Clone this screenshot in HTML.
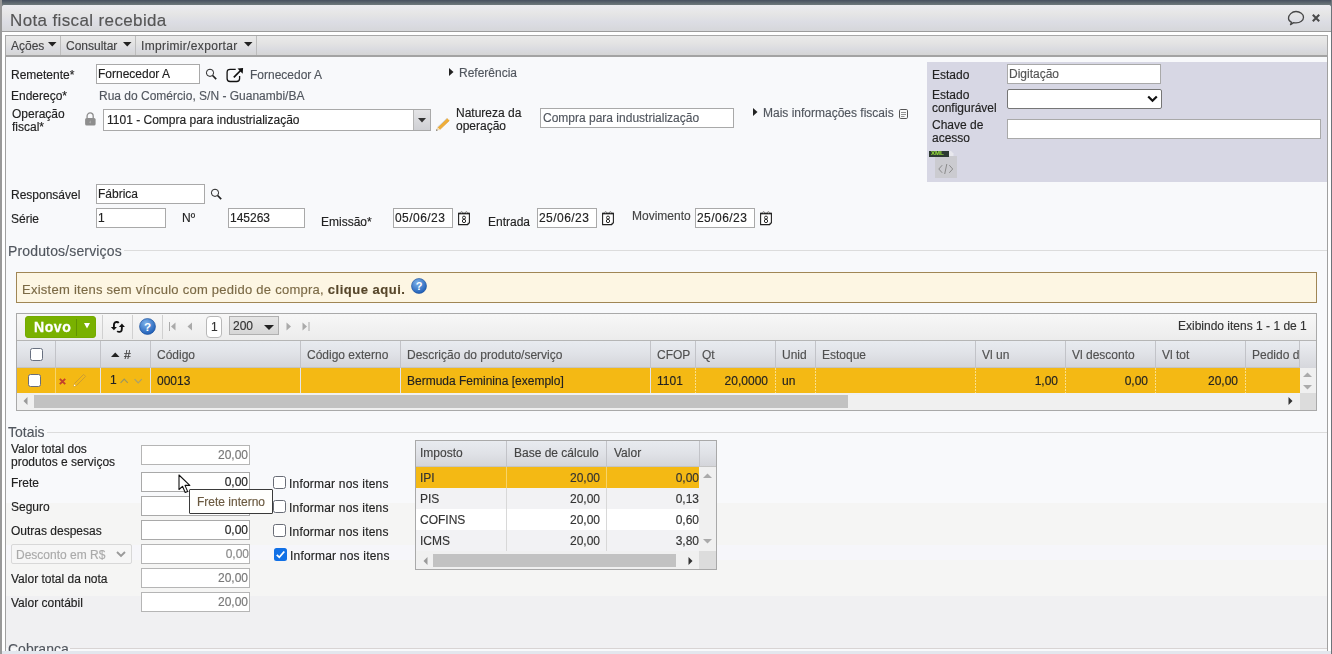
<!DOCTYPE html>
<html><head><meta charset="utf-8">
<style>
*{box-sizing:border-box;margin:0;padding:0}
html,body{width:1332px;height:654px;overflow:hidden}
body{position:relative;background:#7a8288;font-family:"Liberation Sans",sans-serif;font-size:12px;color:#222}
.a{position:absolute}
.t{position:absolute;white-space:nowrap;line-height:14px;font-size:12px;will-change:transform;-webkit-text-stroke:0.15px currentColor}
.g{color:#51565e}
.inp{position:absolute;background:#fff;border:1px solid #a9a9a9}
.tb{position:absolute;white-space:nowrap;line-height:14px;font-size:12px;color:#222}
svg{position:absolute;overflow:visible}
</style></head><body>
<!-- outer frame -->
<div class="a" style="left:0;top:0;width:1332px;height:5px;background:linear-gradient(#47505f,#6f7a7c)"></div>
<div class="a" style="left:0;top:0;width:2px;height:654px;background:#999"></div>
<div class="a" style="left:1331px;top:0;width:1px;height:654px;background:#6d747a"></div>
<!-- window -->
<div class="a" style="left:2px;top:5px;width:1329px;height:649px;background:#fff;border-radius:3px 3px 0 0"></div>
<!-- title bar -->
<div class="a" style="left:2px;top:5px;width:1329px;height:27px;border-radius:3px 3px 0 0;background:linear-gradient(#ececf0 0%,#e5e5e5 35%,#dcdde4 65%,#d6d7da 100%);border-bottom:1px solid #9c9c9c"></div>
<div class="t" style="left:10px;top:11px;font-size:17px;line-height:20px;letter-spacing:0.37px;color:#555">Nota fiscal recebida</div>
<!-- content panel -->
<div class="a" id="content" style="left:5px;top:35px;width:1323px;height:616px;border:1px solid #a0a0a0;border-bottom:none;background:#f8f9fb"></div><div class="a" style="left:6px;top:503px;width:1321px;height:42px;background:#f5f5f4"></div><div class="a" style="left:6px;top:545px;width:1321px;height:15px;background:#f6f6fa"></div><div class="a" style="left:6px;top:560px;width:1321px;height:36px;background:#f5f5f4"></div><div class="a" style="left:6px;top:596px;width:1321px;height:52px;background:#f0f0f2"></div>

<!-- toolbar -->
<div class="a" style="left:5px;top:35px;width:1323px;height:22px;border:1px solid #a8a8a8;border-bottom:2px solid #a3a3a3;background:linear-gradient(#eaeaea 0%,#e3e3e3 40%,#dadbe0 70%,#d5d5d5 100%)"></div>

<!-- toolbar items -->
<div class="t" style="left:11px;top:39px;color:#444">Ações</div>
<svg style="left:48px;top:42px" width="9" height="5"><path d="M0 0H8.5L4.25 4.5Z" fill="#222"/></svg>
<div class="a" style="left:60px;top:36px;width:1px;height:19px;background:#bdbdbd"></div>
<div class="t" style="left:66px;top:39px;color:#444">Consultar</div>
<svg style="left:123px;top:42px" width="9" height="5"><path d="M0 0H8.5L4.25 4.5Z" fill="#222"/></svg>
<div class="a" style="left:135px;top:36px;width:1px;height:19px;background:#bdbdbd"></div>
<div class="t" style="left:141px;top:39px;color:#444;letter-spacing:0.35px">Imprimir/exportar</div>
<svg style="left:244px;top:42px" width="9" height="5"><path d="M0 0H8.5L4.25 4.5Z" fill="#222"/></svg>
<div class="a" style="left:256px;top:36px;width:1px;height:19px;background:#bdbdbd"></div>

<!-- title icons -->
<svg style="left:1287px;top:10px" width="18" height="16" viewBox="0 0 18 16"><path d="M4.6 12.4C2.6 11.4 1.5 9.9 1.5 8.2C1.5 5 4.9 1.5 9 1.5S16.5 4.1 16.5 7.2C16.5 10.4 13.2 12.9 9 12.9C8.2 12.9 7.4 12.8 6.7 12.6L3.5 14.6Z" fill="none" stroke="#474747" stroke-width="1.3" stroke-linejoin="round"/></svg>
<svg style="left:1312px;top:14px" width="8" height="8" viewBox="0 0 8 8"><path d="M0.8 0.8L7.2 7.2M7.2 0.8L0.8 7.2" stroke="#4a4a4a" stroke-width="2.1"/></svg>

<!-- form row 1 -->
<div class="t" style="left:11px;top:68px">Remetente*</div>
<div class="inp" style="left:96px;top:64px;width:104px;height:20px"></div>
<div class="t" style="left:98px;top:67px">Fornecedor A</div>
<svg style="left:205px;top:68px" width="13" height="13" viewBox="0 0 13 13"><circle cx="5" cy="4.8" r="3.6" fill="none" stroke="#222" stroke-width="1"/><path d="M7.6 7.5L11.2 11.1" stroke="#222" stroke-width="1.7"/></svg>
<svg style="left:226px;top:67px" width="18" height="16" viewBox="0 0 18 16"><path d="M9.7 2.3H4.1Q1.1 2.3 1.1 5.3V11.5Q1.1 14.5 4.1 14.5H10.6Q13.6 14.5 13.6 11.5V9.1" fill="none" stroke="#111" stroke-width="1.3"/><path d="M7.8 10.3L14.6 3.5" stroke="#111" stroke-width="1.7"/><path d="M17.1 1L11.5 1.4L16.7 6.8Z" fill="#111"/></svg>
<div class="t g" style="left:250px;top:68px">Fornecedor A</div>
<svg style="left:449px;top:68px" width="5" height="8"><path d="M0 0L4.5 4L0 8Z" fill="#222"/></svg>
<div class="t g" style="left:459px;top:66px">Referência</div>

<div class="t" style="left:11px;top:89px">Endereço*</div>
<div class="t g" style="left:99px;top:89px">Rua do Comércio, S/N - Guanambi/BA</div>

<div class="t" style="left:12px;top:107.5px;line-height:13px">Operação<br>fiscal*</div>
<svg style="left:85px;top:112px" width="11" height="14" viewBox="0 0 11 14"><path d="M2.1 6.5V4A3.05 3.05 0 0 1 8.2 4V6.5" fill="none" stroke="#8e8e8e" stroke-width="1.3"/><rect x="0.1" y="6" width="10.5" height="7.6" rx="1.6" fill="#8e8e8e"/><path d="M5.3 8.2L4.6 10.4L5.4 11.6Z" fill="#d8d8d8"/></svg>
<div class="inp" style="left:103px;top:109px;width:328px;height:22px"></div>
<div class="a" style="left:413px;top:110px;width:17px;height:20px;background:linear-gradient(#e4e4e6,#cfd0d4);border-left:1px solid #b5b5b5"></div>
<svg style="left:418px;top:118px" width="8" height="5"><path d="M0 0H8L4 4.5Z" fill="#333"/></svg>
<div class="t" style="left:107px;top:113px">1101 - Compra para industrialização</div>
<svg style="left:435px;top:117px" width="16" height="16" viewBox="0 0 16 16"><path d="M3.6 11.4L13.2 2.2" stroke="#eeae3a" stroke-width="3.3"/><path d="M2.4 10.3L12 1.2" stroke="#c9d6ea" stroke-width="0.9"/><path d="M4.8 12.6L14.4 3.4" stroke="#e39a22" stroke-width="0.8"/><path d="M1.1 13.8L2.2 10.2L4.7 12.7Z" fill="#f1dcb6"/><path d="M1.1 13.8L1.6 12.2L2.7 13.3Z" fill="#333"/></svg>
<div class="t" style="left:456px;top:107px;line-height:13px">Natureza da<br>operação</div>
<div class="inp" style="left:540px;top:108px;width:194px;height:20px"></div>
<div class="t g" style="left:543px;top:111px">Compra para industrialização</div>
<svg style="left:753px;top:108px" width="5" height="8"><path d="M0 0L4.5 4L0 8Z" fill="#222"/></svg>
<div class="t g" style="left:763px;top:106px">Mais informações fiscais</div>
<svg style="left:899px;top:109px" width="10" height="11" viewBox="0 0 10 11"><rect x="0.5" y="0.5" width="8" height="9" rx="1.2" fill="#fafafa" stroke="#555" stroke-width="1"/><path d="M2 3.5H7M2 5.5H7M2 7.5H5.5" stroke="#777" stroke-width="0.8"/></svg>

<!-- right panel -->
<div class="a" style="left:927px;top:62px;width:400px;height:120px;background:#d7d7e4"></div>
<div class="t" style="left:932px;top:68px">Estado</div>
<div class="inp" style="left:1007px;top:64px;width:154px;height:20px"></div>
<div class="t" style="left:1009px;top:67px;color:#555">Digitação</div>
<div class="t" style="left:932px;top:89px;line-height:13px">Estado<br>configurável</div>
<div class="a" style="left:1007px;top:89px;width:155px;height:20px;background:#fff;border:1px solid #767676;border-radius:2px"></div>
<svg style="left:1147px;top:95px" width="11" height="8" viewBox="0 0 11 8"><path d="M1.2 1.5L5.5 5.8L9.8 1.5" fill="none" stroke="#111" stroke-width="2.2"/></svg>
<div class="t" style="left:932px;top:119px;line-height:13px">Chave de<br>acesso</div>
<div class="inp" style="left:1007px;top:119px;width:314px;height:20px"></div>
<div class="a" style="left:935px;top:156px;width:22px;height:22px;background:#cbcbd0"></div><svg style="left:949px;top:151px" width="5" height="5"><path d="M0 0H2L4.5 2.5V5H0Z" fill="#e8e8ee"/></svg>
<div class="a" style="left:929px;top:151px;width:20px;height:6px;background:#2d3a33"></div>
<div class="t" style="left:931px;top:150px;font-size:6px;line-height:7px;color:#8fd43a;font-weight:bold">XML</div>
<svg style="left:937px;top:163px" width="18" height="12" viewBox="0 0 18 12"><path d="M5.2 2.2L1.8 6L5.2 9.8M12.3 2.2L15.7 6L12.3 9.8M9.8 1L7.7 11" fill="none" stroke="#8a8a8a" stroke-width="1"/></svg>


<!-- responsavel / dates -->
<div class="t" style="left:11px;top:188px">Responsável</div>
<div class="inp" style="left:96px;top:184px;width:109px;height:20px"></div>
<div class="t" style="left:98px;top:187px">Fábrica</div>
<svg style="left:210px;top:188px" width="13" height="13" viewBox="0 0 13 13"><circle cx="5" cy="4.8" r="3.6" fill="none" stroke="#222" stroke-width="1"/><path d="M7.6 7.5L11.2 11.1" stroke="#222" stroke-width="1.7"/></svg>
<div class="t" style="left:11px;top:212px">Série</div>
<div class="inp" style="left:96px;top:208px;width:70px;height:20px"></div>
<div class="t" style="left:98px;top:211px">1</div>
<div class="t" style="left:182px;top:211px">Nº</div>
<div class="inp" style="left:228px;top:208px;width:77px;height:20px"></div>
<div class="t" style="left:230px;top:211px">145263</div>
<div class="t" style="left:321px;top:215px">Emissão*</div>
<div class="inp" style="left:393px;top:208px;width:60px;height:20px"></div>
<div class="t" style="left:395px;top:211px;letter-spacing:0.45px">05/06/23</div>
<svg style="left:458px;top:211px" width="13" height="15" viewBox="0 0 13 15"><path d="M0.6 2.4H11.4V11.8L9.6 13.6H0.6Z" fill="#fff" stroke="#222" stroke-width="1.1"/><path d="M0.6 2.6H11.4" stroke="#222" stroke-width="1.5"/><path d="M9.6 13.6V11.8H11.4Z" fill="#222"/><circle cx="3.6" cy="1.4" r="0.8" fill="#fff" stroke="#333" stroke-width="0.5"/><circle cx="8.4" cy="1.4" r="0.8" fill="#fff" stroke="#333" stroke-width="0.5"/><ellipse cx="6" cy="6.6" rx="1.5" ry="1.5" fill="none" stroke="#222" stroke-width="0.95"/><ellipse cx="6" cy="10" rx="1.65" ry="1.65" fill="none" stroke="#222" stroke-width="0.95"/></svg>
<div class="t" style="left:488px;top:215px">Entrada</div>
<div class="inp" style="left:537px;top:208px;width:60px;height:20px"></div>
<div class="t" style="left:539px;top:211px;letter-spacing:0.45px">25/06/23</div>
<svg style="left:602px;top:211px" width="13" height="15" viewBox="0 0 13 15"><path d="M0.6 2.4H11.4V11.8L9.6 13.6H0.6Z" fill="#fff" stroke="#222" stroke-width="1.1"/><path d="M0.6 2.6H11.4" stroke="#222" stroke-width="1.5"/><path d="M9.6 13.6V11.8H11.4Z" fill="#222"/><circle cx="3.6" cy="1.4" r="0.8" fill="#fff" stroke="#333" stroke-width="0.5"/><circle cx="8.4" cy="1.4" r="0.8" fill="#fff" stroke="#333" stroke-width="0.5"/><ellipse cx="6" cy="6.6" rx="1.5" ry="1.5" fill="none" stroke="#222" stroke-width="0.95"/><ellipse cx="6" cy="10" rx="1.65" ry="1.65" fill="none" stroke="#222" stroke-width="0.95"/></svg>
<div class="t" style="left:632px;top:209px;color:#444">Movimento</div>
<div class="inp" style="left:695px;top:208px;width:60px;height:20px"></div>
<div class="t" style="left:697px;top:211px;letter-spacing:0.45px">25/06/23</div>
<svg style="left:760px;top:211px" width="13" height="15" viewBox="0 0 13 15"><path d="M0.6 2.4H11.4V11.8L9.6 13.6H0.6Z" fill="#fff" stroke="#222" stroke-width="1.1"/><path d="M0.6 2.6H11.4" stroke="#222" stroke-width="1.5"/><path d="M9.6 13.6V11.8H11.4Z" fill="#222"/><circle cx="3.6" cy="1.4" r="0.8" fill="#fff" stroke="#333" stroke-width="0.5"/><circle cx="8.4" cy="1.4" r="0.8" fill="#fff" stroke="#333" stroke-width="0.5"/><ellipse cx="6" cy="6.6" rx="1.5" ry="1.5" fill="none" stroke="#222" stroke-width="0.95"/><ellipse cx="6" cy="10" rx="1.65" ry="1.65" fill="none" stroke="#222" stroke-width="0.95"/></svg>

<!-- Produtos/servicos -->
<div class="t g" style="left:8px;top:243px;font-size:14px;line-height:16px;letter-spacing:0.15px">Produtos/serviços</div>
<div class="a" style="left:124px;top:250px;width:1203px;height:1px;background:#dcdcdc"></div>
<div class="a" style="left:16px;top:272px;width:1301px;height:31px;background:#fdf6e3;border:1px solid #a08655"></div>
<div class="t" style="left:22px;top:282px;font-size:13px;line-height:15px;letter-spacing:0.26px;color:#7b6a46">Existem itens sem vínculo com pedido de compra, <b style="color:#56462a;letter-spacing:0.5px">clique aqui.</b></div>
<svg style="left:411px;top:278px" width="16" height="16" viewBox="0 0 16 16"><defs><radialGradient id="hg" cx="0.4" cy="0.3" r="0.7"><stop offset="0" stop-color="#7fb3ea"/><stop offset="1" stop-color="#1f5fb8"/></radialGradient></defs><circle cx="8" cy="8" r="7.5" fill="url(#hg)" stroke="#1b4f9a" stroke-width="0.6"/><text x="8" y="12.2" font-size="11" font-weight="bold" text-anchor="middle" fill="#fff" font-family="Liberation Sans">?</text></svg>

<!-- grid -->
<div class="a" style="left:16px;top:313px;width:1301px;height:98px;border:1px solid #a9a9a9;background:#f3f3f3"></div>
<div class="a" style="left:17px;top:314px;width:1299px;height:26px;background:linear-gradient(#f7f7f7,#ececec)"></div>
<div class="a" style="left:25px;top:316px;width:71px;height:22px;border-radius:2px;background:#79b100;border:1px solid #74aa00;border-radius:3px"></div>
<div class="t" style="left:34px;top:319px;font-size:14px;line-height:16px;font-weight:bold;color:#fff;letter-spacing:0.6px;-webkit-text-stroke:0.3px #fff">Novo</div>
<div class="a" style="left:76px;top:319px;width:1px;height:17px;background:#629400"></div>
<svg style="left:84px;top:323px" width="6" height="6"><path d="M0 0H6L3 5.5Z" fill="#fff"/></svg>
<div class="a" style="left:102px;top:315px;width:1px;height:24px;background:#d0d0d0"></div>
<svg style="left:110px;top:321px" width="16" height="12" viewBox="0 0 16 12"><path d="M8.8 1.9C7.5 0.6 5.2 0.7 4.2 2.4C3.9 3 3.9 3.6 3.9 6.4" fill="none" stroke="#111" stroke-width="1.9"/><path d="M0.9 6.1H6.9L3.9 9.2Z" fill="#111"/><path d="M11.9 5.6C11.9 8.4 11.9 9 11.6 9.6C10.8 11.2 8.5 11.3 7.2 10.1" fill="none" stroke="#111" stroke-width="1.9"/><path d="M8.9 5.9H14.9L11.9 2.6Z" fill="#111"/></svg>
<div class="a" style="left:132px;top:315px;width:1px;height:24px;background:#d0d0d0"></div>
<svg style="left:139px;top:318px" width="17" height="17" viewBox="0 0 16 16"><circle cx="8" cy="8" r="7.5" fill="url(#hg)" stroke="#1b4f9a" stroke-width="0.6"/><text x="8" y="12.2" font-size="11" font-weight="bold" text-anchor="middle" fill="#fff" font-family="Liberation Sans">?</text></svg>
<div class="a" style="left:162px;top:315px;width:1px;height:24px;background:#d0d0d0"></div>
<svg style="left:169px;top:322px" width="7" height="9"><path d="M0.5 0V9" stroke="#aaa"/><path d="M6.5 0.5V8.5L2 4.5Z" fill="#aaa"/></svg>
<svg style="left:187px;top:322px" width="6" height="9"><path d="M5 0.5V8.5L0.5 4.5Z" fill="#aaa"/></svg>
<div class="a" style="left:206px;top:316px;width:16px;height:22px;border:1px solid #b8b8b8;border-radius:4px;background:#fff"></div>
<div class="t" style="left:211px;top:320px;color:#333">1</div>
<div class="a" style="left:229px;top:316px;width:50px;height:19px;border:1px solid #b0b0b0;background:linear-gradient(#e6e6e6,#d6d6d6)"></div>
<div class="t" style="left:233px;top:319px;color:#333">200</div>
<svg style="left:264px;top:325px" width="10" height="6"><path d="M0 0H10L5 5Z" fill="#222"/></svg>
<svg style="left:286px;top:322px" width="6" height="9"><path d="M0.5 0.5V8.5L5 4.5Z" fill="#aaa"/></svg>
<svg style="left:302px;top:322px" width="8" height="9"><path d="M0.5 0.5V8.5L5 4.5Z" fill="#aaa"/><path d="M7 0V9" stroke="#aaa"/></svg>
<div class="t" style="left:1178px;top:319px;color:#333">Exibindo itens 1 - 1 de 1</div>

<!-- header row -->
<div class="a" style="left:17px;top:340px;width:1299px;height:28px;background:linear-gradient(#e8ebf0 0%,#e0e2e7 50%,#d4d5da 100%);border-top:1px solid #b5b5b5;border-bottom:1px solid #c4c4c4"></div>
<div class="a" style="left:55px;top:341px;width:1px;height:26px;background:#c2c3c8"></div><div class="a" style="left:100px;top:341px;width:1px;height:26px;background:#c2c3c8"></div><div class="a" style="left:150px;top:341px;width:1px;height:26px;background:#c2c3c8"></div><div class="a" style="left:300px;top:341px;width:1px;height:26px;background:#c2c3c8"></div><div class="a" style="left:400px;top:341px;width:1px;height:26px;background:#c2c3c8"></div><div class="a" style="left:650px;top:341px;width:1px;height:26px;background:#c2c3c8"></div><div class="a" style="left:695px;top:341px;width:1px;height:26px;background:#c2c3c8"></div><div class="a" style="left:775px;top:341px;width:1px;height:26px;background:#c2c3c8"></div><div class="a" style="left:815px;top:341px;width:1px;height:26px;background:#c2c3c8"></div><div class="a" style="left:975px;top:341px;width:1px;height:26px;background:#c2c3c8"></div><div class="a" style="left:1065px;top:341px;width:1px;height:26px;background:#c2c3c8"></div><div class="a" style="left:1155px;top:341px;width:1px;height:26px;background:#c2c3c8"></div><div class="a" style="left:1245px;top:341px;width:1px;height:26px;background:#c2c3c8"></div><div class="a" style="left:1299px;top:341px;width:1px;height:26px;background:#c2c3c8"></div>
<div class="a" style="left:30px;top:348px;width:13px;height:13px;border:1px solid #687080;border-radius:2.5px;background:#fff"></div>
<svg style="left:111px;top:352px" width="9" height="6"><path d="M0 5H8.5L4.25 0.6Z" fill="#222"/></svg>
<div class="t" style="left:124px;top:348px;color:#333">#</div>
<div class="t" style="left:157px;top:348px;color:#505050">Código</div><div class="t" style="left:307px;top:348px;color:#505050">Código externo</div><div class="t" style="left:407px;top:348px;color:#505050">Descrição do produto/serviço</div><div class="t" style="left:657px;top:348px;color:#505050">CFOP</div><div class="t" style="left:702px;top:348px;color:#505050">Qt</div><div class="t" style="left:782px;top:348px;color:#505050">Unid</div><div class="t" style="left:822px;top:348px;color:#505050">Estoque</div><div class="t" style="left:982px;top:348px;color:#505050">Vl un</div><div class="t" style="left:1072px;top:348px;color:#505050">Vl desconto</div><div class="t" style="left:1162px;top:348px;color:#505050">Vl tot</div><div class="t" style="left:1252px;top:348px;width:47px;overflow:hidden;color:#505050">Pedido de compra</div>
<!-- data row -->
<div class="a" style="left:17px;top:368px;width:1283px;height:25px;background:#f4b914"></div>
<div class="a" style="left:55px;top:368px;width:1px;height:25px;background:#f7d46a"></div><div class="a" style="left:100px;top:368px;width:1px;height:25px;background:#e2e5ec"></div><div class="a" style="left:150px;top:368px;width:1px;height:25px;background:#e2e5ec"></div><div class="a" style="left:300px;top:368px;width:1px;height:25px;background:#e2e5ec"></div><div class="a" style="left:400px;top:368px;width:1px;height:25px;background:#e2e5ec"></div><div class="a" style="left:650px;top:368px;width:1px;height:25px;background:#e2e5ec"></div><div class="a" style="left:695px;top:368px;width:1px;height:25px;background:repeating-linear-gradient(#fae08a 0 2px,#f4b914 2px 3px)"></div><div class="a" style="left:775px;top:368px;width:1px;height:25px;background:repeating-linear-gradient(#fae08a 0 2px,#f4b914 2px 3px)"></div><div class="a" style="left:815px;top:368px;width:1px;height:25px;background:repeating-linear-gradient(#fae08a 0 2px,#f4b914 2px 3px)"></div><div class="a" style="left:975px;top:368px;width:1px;height:25px;background:repeating-linear-gradient(#fae08a 0 2px,#f4b914 2px 3px)"></div><div class="a" style="left:1065px;top:368px;width:1px;height:25px;background:repeating-linear-gradient(#fae08a 0 2px,#f4b914 2px 3px)"></div><div class="a" style="left:1155px;top:368px;width:1px;height:25px;background:repeating-linear-gradient(#fae08a 0 2px,#f4b914 2px 3px)"></div><div class="a" style="left:1245px;top:368px;width:1px;height:25px;background:repeating-linear-gradient(#fae08a 0 2px,#f4b914 2px 3px)"></div>
<div class="a" style="left:28px;top:374px;width:13px;height:13px;border:1px solid #6a6e7a;border-radius:2.5px;background:#fff"></div>
<svg style="left:59px;top:378px" width="7" height="7"><path d="M0.8 0.8L6.2 6.2M6.2 0.8L0.8 6.2" stroke="#c4412c" stroke-width="1.9"/></svg>
<svg style="left:72px;top:373px" width="15" height="15" viewBox="0 0 15 15"><path d="M1.7 13.3L2.6 10.4L11.6 1.4L13.6 3.4L4.6 12.4Z" fill="none" stroke="#c99a35" stroke-width="0.9"/><path d="M1.7 13.3L2.3 11.3L3.7 12.7Z" fill="#fff"/></svg>
<div class="t" style="left:110px;top:373px">1</div>
<svg style="left:120px;top:378px" width="9" height="6"><path d="M0.6 4.8L4.2 1.2L7.8 4.8" fill="none" stroke="#9a9660" stroke-width="1.2"/></svg>
<svg style="left:134px;top:378px" width="9" height="6"><path d="M0.6 1.2L4.2 4.8L7.8 1.2" fill="none" stroke="#a8a070" stroke-width="1.2"/></svg>
<div class="t" style="left:157px;top:374px">00013</div><div class="t" style="left:407px;top:374px">Bermuda Feminina [exemplo]</div><div class="t" style="left:657px;top:374px">1101</div><div class="t" style="left:782px;top:374px">un</div><div class="t" style="left:668px;width:100px;text-align:right;top:374px">20,0000</div><div class="t" style="left:958px;width:100px;text-align:right;top:374px">1,00</div><div class="t" style="left:1048px;width:100px;text-align:right;top:374px">0,00</div><div class="t" style="left:1138px;width:100px;text-align:right;top:374px">20,00</div>
<!-- scrollbars -->
<div class="a" style="left:17px;top:393px;width:1283px;height:17px;background:#f0f0f0"></div>
<div class="a" style="left:34px;top:395px;width:814px;height:13px;background:#c2c2c2"></div>
<svg style="left:23px;top:397px" width="5" height="8"><path d="M4.5 0V8L0.5 4Z" fill="#9a9a9a"/></svg>
<svg style="left:1288px;top:397px" width="5" height="8"><path d="M0.5 0V8L4.5 4Z" fill="#333"/></svg>
<div class="a" style="left:1300px;top:341px;width:16px;height:27px;background:linear-gradient(#eceef2,#d6d7dc)"></div>
<div class="a" style="left:1300px;top:368px;width:16px;height:25px;background:#f0f0f0"></div>
<svg style="left:1303px;top:372px" width="9" height="5"><path d="M0 5H9L4.5 0.5Z" fill="#aaa"/></svg>
<svg style="left:1303px;top:385px" width="9" height="5"><path d="M0 0H9L4.5 4.5Z" fill="#aaa"/></svg>
<div class="a" style="left:1300px;top:393px;width:16px;height:17px;background:#dcdcdc"></div>


<!-- Totais -->
<div class="t g" style="left:8px;top:424px;font-size:14px;line-height:16px">Totais</div>
<div class="a" style="left:47px;top:432px;width:1280px;height:1px;background:#dcdcdc"></div>
<div class="t" style="left:11px;top:443px;line-height:13px">Valor total dos<br>produtos e serviços</div>
<div class="inp" style="left:141px;top:445px;width:109px;height:20px;border-color:#b5b5b5"></div>
<div class="t" style="left:141px;width:107px;text-align:right;top:448px;color:#777">20,00</div>
<div class="t" style="left:11px;top:476px">Frete</div>
<div class="inp" style="left:141px;top:472px;width:109px;height:20px"></div>
<div class="t" style="left:141px;width:107px;text-align:right;top:475px">0,00</div>
<div class="t" style="left:11px;top:500px">Seguro</div>
<div class="inp" style="left:141px;top:496px;width:109px;height:20px"></div>
<div class="t" style="left:11px;top:524px">Outras despesas</div>
<div class="inp" style="left:141px;top:520px;width:109px;height:20px"></div>
<div class="t" style="left:141px;width:107px;text-align:right;top:523px">0,00</div>
<div class="a" style="left:11px;top:544px;width:121px;height:20px;border:1px solid #d8d8d8;border-radius:2px;background:#f6f6f6"></div>
<div class="t" style="left:16px;top:548px;color:#aaa">Desconto em R$</div>
<svg style="left:116px;top:551px" width="10" height="6" viewBox="0 0 10 6"><path d="M1 1L5 5L9 1" fill="none" stroke="#9a9a9a" stroke-width="1.9"/></svg>
<div class="inp" style="left:141px;top:544px;width:109px;height:20px;border-color:#b5b5b5"></div>
<div class="t" style="left:141px;width:108px;text-align:right;top:547px;color:#888">0,00</div>
<div class="t" style="left:11px;top:572px">Valor total da nota</div>
<div class="inp" style="left:141px;top:568px;width:109px;height:20px;border-color:#b5b5b5"></div>
<div class="t" style="left:141px;width:107px;text-align:right;top:571px;color:#777">20,00</div>
<div class="t" style="left:11px;top:596px">Valor contábil</div>
<div class="inp" style="left:141px;top:592px;width:109px;height:20px;border-color:#b5b5b5"></div>
<div class="t" style="left:141px;width:107px;text-align:right;top:595px;color:#777">20,00</div>
<div class="t g" style="left:8px;top:641px;font-size:14px;line-height:16px">Cobrança</div>
<div class="a" style="left:70px;top:648px;width:1257px;height:1px;background:#d8d4d4"></div>

<!-- checkboxes -->
<div class="a" style="left:273px;top:476px;width:13px;height:13px;border:1px solid #686c76;border-radius:2.5px;background:#fff"></div>
<div class="t" style="left:289px;top:477px;letter-spacing:0.2px">Informar nos itens</div>
<div class="a" style="left:273px;top:500px;width:13px;height:13px;border:1px solid #686c76;border-radius:2.5px;background:#fff"></div>
<div class="t" style="left:289px;top:501px;letter-spacing:0.2px">Informar nos itens</div>
<div class="a" style="left:273px;top:524px;width:13px;height:13px;border:1px solid #686c76;border-radius:2.5px;background:#fff"></div>
<div class="t" style="left:289px;top:525px;letter-spacing:0.2px">Informar nos itens</div>
<div class="a" style="left:274px;top:548px;width:13px;height:13px;border-radius:2.5px;background:#1170e6"></div>
<svg style="left:274px;top:548px" width="13" height="13" viewBox="0 0 13 13"><path d="M2.8 6.8L5.3 9.3L10.3 3.5" fill="none" stroke="#fff" stroke-width="1.8"/></svg>
<div class="t" style="left:290px;top:549px;letter-spacing:0.2px">Informar nos itens</div>

<!-- tax grid -->
<div class="a" style="left:415px;top:440px;width:302px;height:130px;border:1px solid #a9a9a9;background:#f1f1f1"></div>
<div class="a" style="left:416px;top:441px;width:300px;height:26px;background:linear-gradient(#e8ebf0 0%,#e0e2e7 50%,#d4d5da 100%);border-bottom:1px solid #c4c4c4"></div>
<div class="a" style="left:506px;top:441px;width:1px;height:26px;background:#c2c3c8"></div>
<div class="a" style="left:606px;top:441px;width:1px;height:26px;background:#c2c3c8"></div>
<div class="a" style="left:699px;top:441px;width:1px;height:26px;background:#c2c3c8"></div>
<div class="t" style="left:420px;top:446px;color:#444">Imposto</div>
<div class="t" style="left:514px;top:446px;color:#444">Base de cálculo</div>
<div class="t" style="left:614px;top:446px;color:#444">Valor</div>
<div class="a" style="left:416px;top:467px;width:283px;height:21px;background:#f4b914"></div>
<div class="a" style="left:416px;top:488px;width:283px;height:21px;background:#f2f2f4"></div>
<div class="a" style="left:416px;top:509px;width:283px;height:21px;background:#fff"></div>
<div class="a" style="left:416px;top:530px;width:283px;height:21px;background:#f2f2f4"></div>
<div class="a" style="left:506px;top:467px;width:1px;height:84px;background:#d8d8d8"></div>
<div class="a" style="left:606px;top:467px;width:1px;height:84px;background:#d8d8d8"></div>
<div class="a" style="left:506px;top:467px;width:1px;height:21px;background:#f7d46a"></div>
<div class="a" style="left:606px;top:467px;width:1px;height:21px;background:#f7d46a"></div>
<div class="t" style="left:420px;top:471px;color:#333">IPI</div><div class="t" style="left:500px;width:100px;text-align:right;top:471px;color:#333">20,00</div><div class="t" style="left:599px;width:100px;text-align:right;top:471px;color:#333">0,00</div><div class="t" style="left:420px;top:492px;color:#333">PIS</div><div class="t" style="left:500px;width:100px;text-align:right;top:492px;color:#333">20,00</div><div class="t" style="left:599px;width:100px;text-align:right;top:492px;color:#333">0,13</div><div class="t" style="left:420px;top:513px;color:#333">COFINS</div><div class="t" style="left:500px;width:100px;text-align:right;top:513px;color:#333">20,00</div><div class="t" style="left:599px;width:100px;text-align:right;top:513px;color:#333">0,60</div><div class="t" style="left:420px;top:534px;color:#333">ICMS</div><div class="t" style="left:500px;width:100px;text-align:right;top:534px;color:#333">20,00</div><div class="t" style="left:599px;width:100px;text-align:right;top:534px;color:#333">3,80</div>
<div class="a" style="left:699px;top:467px;width:17px;height:84px;background:#f0f0f0"></div>
<svg style="left:703px;top:473px" width="9" height="5"><path d="M0 5H9L4.5 0.5Z" fill="#aaa"/></svg>
<svg style="left:703px;top:539px" width="9" height="5"><path d="M0 0H9L4.5 4.5Z" fill="#aaa"/></svg>
<div class="a" style="left:416px;top:551px;width:283px;height:18px;background:#f0f0f0"></div>
<div class="a" style="left:433px;top:554px;width:243px;height:13px;background:#c2c2c2"></div>
<svg style="left:423px;top:557px" width="5" height="8"><path d="M4.5 0V8L0.5 4Z" fill="#9a9a9a"/></svg>
<svg style="left:688px;top:557px" width="5" height="8"><path d="M0.5 0V8L4.5 4Z" fill="#333"/></svg>
<div class="a" style="left:699px;top:551px;width:17px;height:18px;background:#dcdcdc"></div>

<!-- tooltip -->
<div class="a" style="left:189px;top:489px;width:84px;height:25px;background:#fffffd;border:1px solid #3a3a3a;border-radius:1px"></div>
<div class="t" style="left:197px;top:495px;color:#6b5a40">Frete interno</div>
<!-- cursor -->
<svg style="left:178px;top:474px" width="14" height="20" viewBox="0 0 14 20"><path d="M1 1V15.5L4.5 12.3L7.2 18.5L9.6 17.4L7 11.4H11.8Z" fill="#fff" stroke="#111" stroke-width="1.1" stroke-linejoin="round"/></svg>

<div class="a" style="left:2px;top:651px;width:1329px;height:3px;background:#e3e7ee"></div>
</body></html>
